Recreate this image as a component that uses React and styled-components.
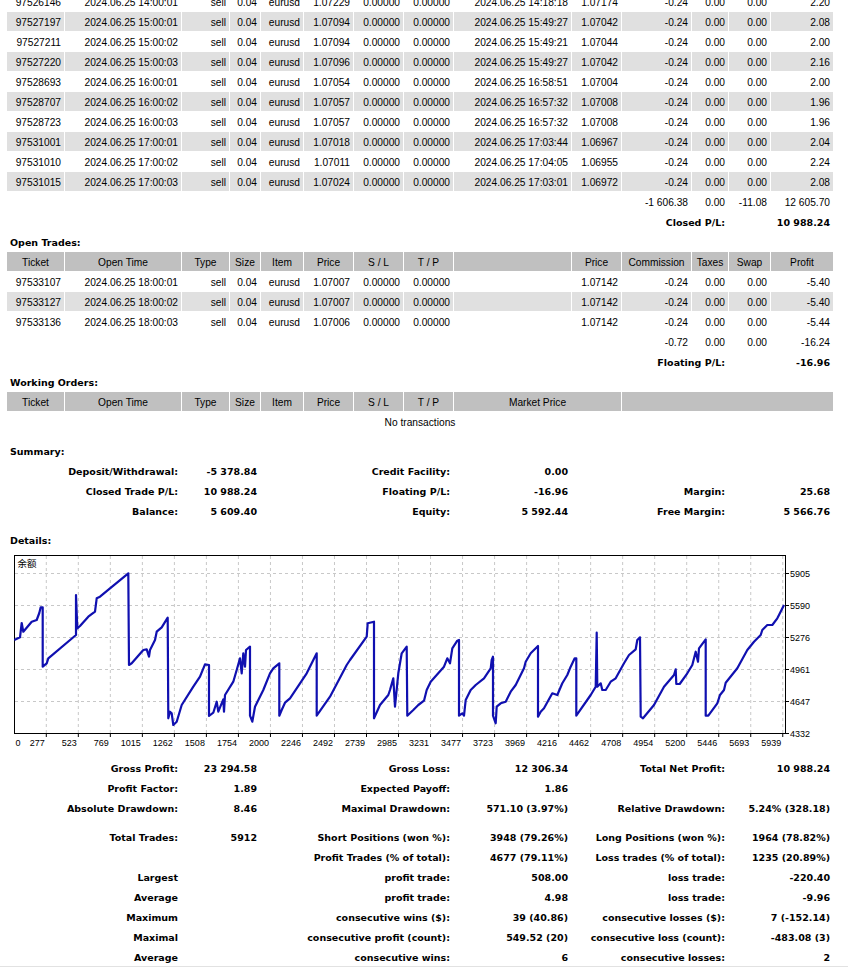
import React from "react";
import styled, { createGlobalStyle } from "styled-components";

const GlobalStyle = createGlobalStyle`
  body {
    margin: 0;
    background: #fff;
    overflow: hidden;
  }
`;

// column grid shared by every table row of the statement
const COLS = "57px 116px 47px 30px 42px 49px 49px 49px 117px 49px 69px 36px 41px 62px";

const Page = styled.div`
  width: 826px;
  margin: -8px 0 0 7px;
  display: flex;
  flex-direction: column;
  gap: 1px;
  font-family: "Liberation Sans", Arial, sans-serif;
  font-size: 10.2px;
  color: #000;
`;

const Row = styled.div`
  display: grid;
  grid-template-columns: ${COLS};
  column-gap: 1px;
  height: 19px;
`;

const Cell = styled.div`
  grid-column: span ${(p) => p.$span || 1};
  background: ${(p) => (p.$shade ? "#e0e0e0" : "transparent")};
  text-align: ${(p) => p.$align || "right"};
  padding: 1px 3px 0;
  line-height: 19px;
  white-space: nowrap;
  overflow: hidden;
`;

const HeadCell = styled(Cell)`
  background: #c0c0c0;
  text-align: center;
`;

const BoldCell = styled(Cell)`
  font-family: "DejaVu Sans", Verdana, sans-serif;
  font-weight: bold;
  font-size: 9.5px;
`;

const SectionTitle = styled(BoldCell)`
  grid-column: span 14;
  text-align: left;
`;

const Spacer = styled.div`
  height: 8px;
`;

const Chart = styled.svg`
  display: block;
  width: 826px;
  height: 198px;
`;

const BottomRule = styled.div`
  margin: -1px 0 0 -7px;
  width: 848px;
  height: 1px;
  background: #e2e2e2;
`;

const closed = [
  ["97526146", "14:00:01", "1.07229", "14:18:18", "1.07174", "2.20"],
  ["97527197", "15:00:01", "1.07094", "15:49:27", "1.07042", "2.08"],
  ["97527211", "15:00:02", "1.07094", "15:49:21", "1.07044", "2.00"],
  ["97527220", "15:00:03", "1.07096", "15:49:27", "1.07042", "2.16"],
  ["97528693", "16:00:01", "1.07054", "16:58:51", "1.07004", "2.00"],
  ["97528707", "16:00:02", "1.07057", "16:57:32", "1.07008", "1.96"],
  ["97528723", "16:00:03", "1.07057", "16:57:32", "1.07008", "1.96"],
  ["97531001", "17:00:01", "1.07018", "17:03:44", "1.06967", "2.04"],
  ["97531010", "17:00:02", "1.07011", "17:04:05", "1.06955", "2.24"],
  ["97531015", "17:00:03", "1.07024", "17:03:01", "1.06972", "2.08"],
];

const open = [
  ["97533107", "18:00:01", "1.07007", "-5.40"],
  ["97533127", "18:00:02", "1.07007", "-5.40"],
  ["97533136", "18:00:03", "1.07006", "-5.44"],
];

const baseHead = ["Ticket", "Open Time", "Type", "Size", "Item", "Price", "S / L", "T / P"];

const summary = [
  ["Deposit/Withdrawal:", "-5 378.84", "Credit Facility:", "0.00", "", ""],
  ["Closed Trade P/L:", "10 988.24", "Floating P/L:", "-16.96", "Margin:", "25.68"],
  ["Balance:", "5 609.40", "Equity:", "5 592.44", "Free Margin:", "5 566.76"],
];

const statsTop = [
  ["Gross Profit:", "23 294.58", "Gross Loss:", "12 306.34", "Total Net Profit:", "10 988.24"],
  ["Profit Factor:", "1.89", "Expected Payoff:", "1.86", "", ""],
  ["Absolute Drawdown:", "8.46", "Maximal Drawdown:", "571.10 (3.97%)", "Relative Drawdown:", "5.24% (328.18)"],
];

const statsBottom = [
  ["Total Trades:", "5912", "Short Positions (won %):", "3948 (79.26%)", "Long Positions (won %):", "1964 (78.82%)"],
  ["", "", "Profit Trades (% of total):", "4677 (79.11%)", "Loss trades (% of total):", "1235 (20.89%)"],
  ["Largest", "", "profit trade:", "508.00", "loss trade:", "-220.40"],
  ["Average", "", "profit trade:", "4.98", "loss trade:", "-9.96"],
  ["Maximum", "", "consecutive wins ($):", "39 (40.86)", "consecutive losses ($):", "7 (-152.14)"],
  ["Maximal", "", "consecutive profit (count):", "549.52 (20)", "consecutive loss (count):", "-483.08 (3)"],
  ["Average", "", "consecutive wins:", "6", "consecutive losses:", "2"],
];

const SixRow = ({ r }) => (
  <Row>
    <BoldCell $span={2}>{r[0]}</BoldCell>
    <BoldCell $span={2}>{r[1]}</BoldCell>
    <BoldCell $span={4}>{r[2]}</BoldCell>
    <BoldCell>{r[3]}</BoldCell>
    <BoldCell $span={3}>{r[4]}</BoldCell>
    <BoldCell $span={2}>{r[5]}</BoldCell>
  </Row>
);

const line = [
  [14.3, 640], [20, 637.3], [21.7, 623], [23.3, 631.7], [31.7, 621.7], [36.7, 620], [39.3, 613], [40.7, 607.3],
  [42.7, 607.3], [42.7, 666.7], [46.7, 663.3], [48.3, 658.3], [76, 635], [76, 595], [77.3, 628.3], [80, 626],
  [88.3, 616.7], [95, 611.7], [96.7, 598.3], [100, 596.7], [110, 588.3], [128.3, 573.3], [129, 665], [131.7, 663.3],
  [143.3, 650], [146.7, 649.3], [149, 656.7], [150, 650], [155, 640], [156.7, 631.7], [161.7, 627.3], [167.7, 617.7],
  [168.3, 718.3], [170, 711.7], [171.7, 713.3], [173.3, 725], [176.7, 721.7], [181.7, 705], [193.3, 686.7],
  [200, 676.7], [205, 664.3], [209, 665], [209, 716], [213.3, 712.7], [216.7, 701.7], [218.3, 711.7], [223.3, 699.3],
  [224, 711.7], [225, 695], [233.3, 681.7], [236.7, 670], [240, 658.3], [241.7, 673.3], [243.3, 653.3], [245, 666.7],
  [246, 650], [250, 646.7], [250, 715.7], [252.3, 721.7], [255, 706.7], [263.3, 690], [270, 673.3], [273.3, 668.3],
  [279.3, 663.3], [279.3, 715.7], [281.7, 710], [285, 702.7], [290, 698.3], [306.7, 673.3], [316.7, 653.3],
  [316.7, 715.7], [330, 696.7], [346.7, 665], [350, 660], [366.7, 636.7], [367.7, 623.3], [374, 621.7], [374, 718.3],
  [380, 705], [388.3, 695], [390, 690], [393.3, 678.3], [395, 706.7], [398.3, 673.3], [401.7, 653.3], [406.7, 646.7],
  [407.3, 715.7], [413.3, 710], [418.3, 705], [424, 700.7], [426.7, 690], [430.7, 681.7], [444, 666.7], [447.3, 658.3],
  [450, 663.3], [452.3, 648.3], [457.3, 640.7], [459, 640], [459, 715.7], [462.3, 713.3], [464, 715.7], [465.7, 700],
  [470.7, 690], [475.7, 685], [484, 678.3], [490.7, 668.3], [491.7, 660], [493, 656.7], [493, 715.7], [495.7, 723.3],
  [496.7, 706.7], [500.7, 703.3], [505.7, 701.7], [510.7, 691.7], [515.7, 685], [524, 668.3], [525.7, 661.7],
  [530.7, 653.3], [538, 646], [538, 716.7], [540.7, 711.7], [544, 708.3], [552.3, 693.3], [557.3, 695], [562.3, 683.3],
  [567.3, 675], [570.7, 666.7], [574.7, 658.3], [576.3, 658.3], [576.3, 715.7], [590.7, 695], [595.7, 686.7],
  [596.7, 632.7], [597.3, 686.7], [600.7, 683.3], [602.3, 690], [605.7, 690], [610.7, 681.7], [615.7, 678.3],
  [624, 663.3], [629, 655], [635.7, 649.3], [637.3, 640], [640, 637.3], [640.7, 716.7], [643, 718.3], [654, 705],
  [664, 686.7], [674, 675], [675.7, 669.3], [676.3, 684], [679.7, 684], [687.3, 673.3], [692.3, 665], [695.7, 651.7],
  [698, 661.7], [699, 648.3], [705.7, 639.3], [705.7, 715.7], [708.3, 715.7], [717.3, 703.3], [720, 695], [724, 690],
  [725.7, 682.7], [737.3, 668.3], [747.3, 650], [754, 641.7], [760.7, 635], [762.3, 630], [767.3, 625], [772.3, 625],
  [777.3, 618.3], [779, 615], [784, 605],
];

const xLabels = ["277", "523", "769", "1015", "1262", "1508", "1754", "2000", "2246", "2492", "2739", "2985",
  "3231", "3477", "3723", "3969", "4216", "4462", "4708", "4954", "5200", "5446", "5693", "5939"];
const yLabels = ["5905", "5590", "5276", "4961", "4647", "4332"];

const BalanceChart = () => {
  const xs = xLabels.map((_, i) => 46.3 + i * 32.02);
  const ys = yLabels.map((_, i) => 573.5 + i * 32);
  return (
    <Chart viewBox="7 550 826 198">
      {ys.slice(0, 5).map((y) => (
        <line key={y} x1="15" x2="785" y1={y} y2={y} stroke="#c8c8c8" strokeDasharray="3 3" />
      ))}
      {xs.map((x) => (
        <line key={x} x1={x} x2={x} y1="556" y2="733" stroke="#c8c8c8" strokeDasharray="3 3" />
      ))}
      <rect x="14.5" y="555.5" width="771" height="178" fill="none" stroke="#000" />
      {xs.map((x) => (
        <line key={"t" + x} x1={x} x2={x} y1="734" y2="737" stroke="#000" />
      ))}
      {ys.map((y) => (
        <line key={"r" + y} x1="786" x2="789" y1={y} y2={y} stroke="#000" />
      ))}
      <polyline
        points={line.map((p) => p.join(",")).join(" ")}
        fill="none"
        stroke="#1010b0"
        strokeWidth="2.2"
        strokeLinejoin="round"
      />
      <text x="17.5" y="567" fontSize="9.5" fontFamily={'"Noto Sans CJK SC", sans-serif'}>余额</text>
      <g fontSize="9" fontFamily={'"Liberation Sans", Arial, sans-serif'} fill="#000">
        <text x="15.5" y="746">0</text>
        {xs.map((x, i) => (
          <text key={i} x={x - 1.5} y="746" textAnchor="end">{xLabels[i]}</text>
        ))}
        {ys.map((y, i) => (
          <text key={i} x="790" y={y + 3}>{yLabels[i]}</text>
        ))}
      </g>
    </Chart>
  );
};

const App = () => (
  <>
    <GlobalStyle />
    <Page>
      {closed.map((r, i) => (
        <Row key={r[0]}>
          {[r[0], "2024.06.25 " + r[1], "sell", "0.04", "eurusd", r[2], "0.00000", "0.00000",
            "2024.06.25 " + r[3], r[4], "-0.24", "0.00", "0.00", r[5]].map((v, j) => (
            <Cell key={j} $shade={i % 2 === 1}>{v}</Cell>
          ))}
        </Row>
      ))}
      <Row>
        <Cell $span={10} />
        <Cell>-1 606.38</Cell>
        <Cell>0.00</Cell>
        <Cell>-11.08</Cell>
        <Cell>12 605.70</Cell>
      </Row>
      <Row>
        <BoldCell $span={12}>Closed P/L:</BoldCell>
        <BoldCell $span={2}>10 988.24</BoldCell>
      </Row>

      <Row>
        <SectionTitle>Open Trades:</SectionTitle>
      </Row>
      <Row>
        {baseHead.map((h) => <HeadCell key={h}>{h}</HeadCell>)}
        <HeadCell />
        {["Price", "Commission", "Taxes", "Swap", "Profit"].map((h) => <HeadCell key={"o" + h}>{h}</HeadCell>)}
      </Row>
      {open.map((r, i) => (
        <Row key={r[0]}>
          {[r[0], "2024.06.25 " + r[1], "sell", "0.04", "eurusd", r[2], "0.00000", "0.00000",
            "", "1.07142", "-0.24", "0.00", "0.00", r[3]].map((v, j) => (
            <Cell key={j} $shade={i === 1}>{v}</Cell>
          ))}
        </Row>
      ))}
      <Row>
        <Cell $span={10} />
        <Cell>-0.72</Cell>
        <Cell>0.00</Cell>
        <Cell>0.00</Cell>
        <Cell>-16.24</Cell>
      </Row>
      <Row>
        <BoldCell $span={12}>Floating P/L:</BoldCell>
        <BoldCell $span={2}>-16.96</BoldCell>
      </Row>

      <Row>
        <SectionTitle>Working Orders:</SectionTitle>
      </Row>
      <Row>
        {baseHead.map((h) => <HeadCell key={h}>{h}</HeadCell>)}
        <HeadCell $span={2}>Market Price</HeadCell>
        <HeadCell $span={4} />
      </Row>
      <Row>
        <Cell $span={14} $align="center">No transactions</Cell>
      </Row>
      <Spacer />

      <Row>
        <SectionTitle>Summary:</SectionTitle>
      </Row>
      {summary.map((r) => <SixRow key={r[0]} r={r} />)}
      <Spacer />

      <Row>
        <SectionTitle>Details:</SectionTitle>
      </Row>
      <BalanceChart />
      <Spacer />

      {statsTop.map((r) => <SixRow key={r[0]} r={r} />)}
      <Spacer />
      {statsBottom.map((r, i) => <SixRow key={i} r={r} />)}
      <BottomRule />
    </Page>
  </>
);

export default App;
